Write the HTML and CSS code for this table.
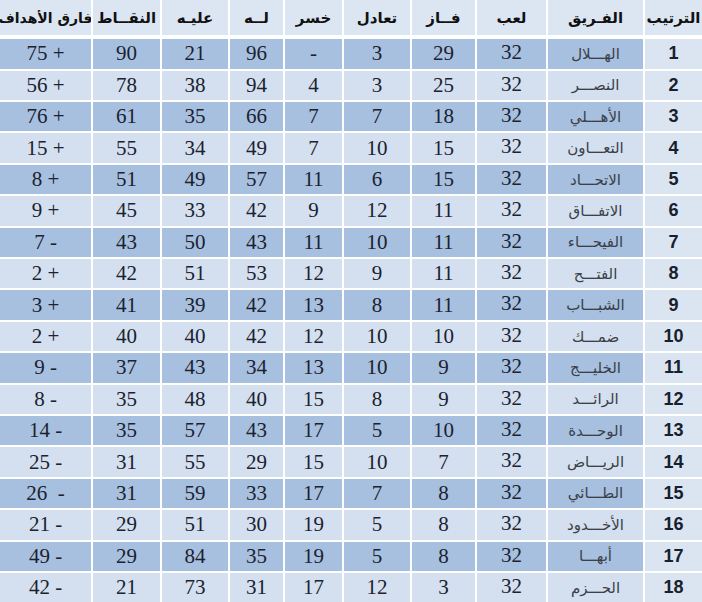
FILE: index.html
```html
<!DOCTYPE html>
<html lang="ar" dir="rtl">
<head>
<meta charset="utf-8">
<link rel="stylesheet" href="styles.css">
</head>
<body>
<div class="table">
  <div class="row head">
    <div class="c rank">الترتيب</div>
    <div class="c">الفـريق</div>
    <div class="c">لعب</div>
    <div class="c">فــاز</div>
    <div class="c">تعادل</div>
    <div class="c">خسر</div>
    <div class="c">لــه</div>
    <div class="c">عليـه</div>
    <div class="c">النقــاط</div>
    <div class="c gdh">فارق الأهداف</div>
  </div>
</div>
<script src="app.js"></script>
</body>
</html>
```

FILE: app.js
```js
const rows = [
 [1,"الهـــلال",32,29,3,"-",96,21,90,"75 +"],
 [2,"النصـــر",32,25,3,4,94,38,78,"56 +"],
 [3,"الأهـــلي",32,18,7,7,66,35,61,"76 +"],
 [4,"التعـــاون",32,15,10,7,49,34,55,"15 +"],
 [5,"الاتحـــاد",32,15,6,11,57,49,51,"8 +"],
 [6,"الاتفـــاق",32,11,12,9,42,33,45,"9 +"],
 [7,"الفيحـــاء",32,11,10,11,43,50,43,"7 -"],
 [8,"الفتـــح",32,11,9,12,53,51,42,"2 +"],
 [9,"الشبـــاب",32,11,8,13,42,39,41,"3 +"],
 [10,"ضمـــك",32,10,10,12,42,40,40,"2 +"],
 [11,"الخليـــج",32,9,10,13,34,43,37,"9 -"],
 [12,"الرائـــد",32,9,8,15,40,48,35,"8 -"],
 [13,"الوحـــدة",32,10,5,17,43,57,35,"14 -"],
 [14,"الريـــاض",32,7,10,15,29,55,31,"25 -"],
 [15,"الطـــائي",32,8,7,17,33,59,31,"26  -"],
 [16,"الأخـــدود",32,8,5,19,30,51,29,"21 -"],
 [17,"أبهـــا",32,8,5,19,35,84,29,"49 -"],
 [18,"الحـــزم",32,3,12,17,31,73,21,"42 -"]
];
const table = document.querySelector('.table');
rows.forEach((r, i) => {
  const row = document.createElement('div');
  row.className = 'row ' + (i % 2 === 0 ? 'dark' : 'light');
  r.forEach((v, j) => {
    const c = document.createElement('div');
    c.className = 'c';
    if (j === 0) c.classList.add('rank');
    else if (j === 1) c.classList.add('team');
    else if (j === 2) c.classList.add('num', 'played');
    else if (j === 9) { c.classList.add('num', 'gd'); }
    else c.classList.add('num');
    if (j === 9) {
      const s = document.createElement('span');
      s.dir = 'ltr';
      s.textContent = v;
      c.appendChild(s);
    } else {
      c.textContent = v;
    }
    row.appendChild(c);
  });
  table.appendChild(row);
});
```

FILE: styles.css
```css
html, body {
  margin: 0;
  padding: 0;
  background: #ffffff;
}

.table {
  width: 702px;
  display: flex;
  flex-direction: column;
  gap: 2px;
}

.row {
  display: grid;
  grid-template-columns: 57px 95px 69px 63px 66px 57px 53px 66px 67px 91px;
  column-gap: 2px;
  height: 29.4px;
}

.row.head {
  height: 35.3px;
  margin-bottom: 2px;
}

.c {
  display: flex;
  align-items: center;
  justify-content: center;
  color: #1b2230;
  white-space: nowrap;
  overflow: hidden;
}

.head .c {
  background: #dce6f2;
  font-family: "DejaVu Sans", "Liberation Sans", sans-serif;
  font-weight: bold;
  font-size: 15px;
  color: #111111;
}

.head .gdh {
  font-size: 14px;
}

.dark .c { background: #a8c0df; }
.light .c { background: #d4e0ef; }
.row .c.rank { background: #dbe5f1; }
.head .c.rank { background: #dce6f2; }

.rank {
  font-family: "Liberation Sans", Arial, sans-serif;
  font-weight: bold;
  font-size: 18px;
  color: #17202e;
}

.team {
  font-family: "DejaVu Sans", sans-serif;
  font-size: 15px;
  color: #3a3f48;
}

.num {
  font-family: "Liberation Serif", "Times New Roman", serif;
  font-size: 21px;
  color: #1b2230;
}

.played {
  align-items: flex-start;
  padding-top: 1px;
}

.gd span {
  white-space: pre;
}
```
